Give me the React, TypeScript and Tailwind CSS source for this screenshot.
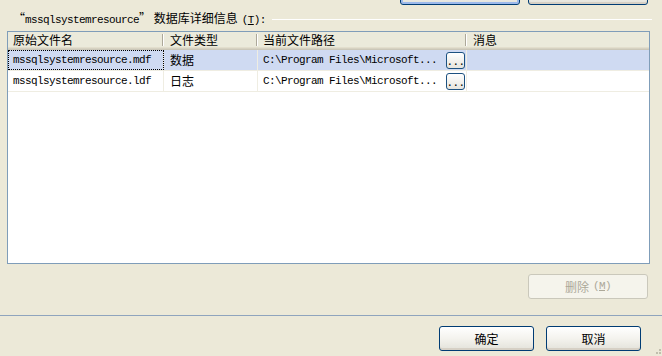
import React from "react";

const cjk = { fontFamily: '"Noto Sans CJK SC", "Noto Sans", sans-serif' };
const mono = { fontFamily: '"Liberation Mono", "Noto Sans CJK SC", monospace' };

function XpButton({ label, focused, w, children }: { label?: string; focused?: boolean; w: string; children?: React.ReactNode }) {
  return (
    <div
      className={`${w} h-[25px] rounded-[3px] border border-[#003C74] bg-gradient-to-b from-[#FFFFFF] via-[#F4F3EE] to-[#E3E2DA] flex items-center justify-center text-[12px] text-black ${focused ? "shadow-[inset_0_0_0_2px_#9CB9EB]" : "shadow-[inset_0_-2px_0_#D6D0C5]"}`}
      style={cjk}
    >
      {label}
      {children}
    </div>
  );
}

function DotBtn() {
  return (
    <div className="w-[19px] h-[17px] mr-[1px] rounded-[3px] border border-[#1C5180] bg-gradient-to-b from-[#FFFFFF] to-[#E6E5DE] flex items-end justify-center pb-[1px] text-[11px] leading-[10px] tracking-[-0.6px] text-black" style={mono}>
      ...
    </div>
  );
}

function Row({ name, type, selected }: { name: string; type: string; selected?: boolean }) {
  return (
    <div className={`flex h-[21px] border-b border-[#EFEDE2] ${selected ? "bg-[#CFDAF2]" : "bg-white"}`}>
      <div className={`w-[156px] shrink-0 flex items-center pl-[5px] text-[11px] tracking-[-0.6px] text-black ${selected ? "outline-1 outline-dotted outline-black -outline-offset-1" : ""} border-r border-[#EFEDE2]`} style={mono}>
        {name}
      </div>
      <div className="w-[94px] shrink-0 flex items-center pl-[6px] text-[12px] text-black border-r border-[#EFEDE2]" style={cjk}>
        {type}
      </div>
      <div className="w-[209px] shrink-0 flex items-center justify-between pl-[5px] text-[11px] tracking-[-0.6px] text-black border-r border-[#EFEDE2]" style={mono}>
        <span>C:\Program Files\Microsoft...</span>
        <DotBtn />
      </div>
      <div className="flex-1" />
    </div>
  );
}

function HeadCell({ label, w, sep = true, pl }: { label: string; w: string; sep?: boolean; pl: string }) {
  return (
    <div className={`${w} shrink-0 flex items-center justify-between ${pl}`}>
      <span className="text-[12px] leading-[14px] text-black" style={cjk}>{label}</span>
      {sep ? <div className="w-[2px] h-[12px] border-l border-[#ACA899] border-r border-r-white" /> : null}
    </div>
  );
}

export default function App() {
  return (
    <div className="w-[662px] h-[356px] bg-[#ECE9D8] relative overflow-hidden flex flex-col">
      {/* clipped top buttons */}
      <div className="h-[5px] overflow-hidden flex items-end pl-[400px] gap-[8px] shrink-0">
        <XpButton w="w-[120px]" focused />
        <XpButton w="w-[120px]" />
      </div>

      {/* label row */}
      <div className="mt-[7px] h-[14px] flex items-center pl-[13px] pr-[10px] shrink-0">
        <span className="text-[12px] leading-[14px] text-black whitespace-nowrap" style={cjk}>
          “<span className="text-[11px] tracking-[-0.6px]" style={mono}>mssqlsystemresource</span>” 数据库详细信息
          <span className="text-[11px] tracking-[-0.6px] ml-[4px]" style={mono}>(<span className="underline">T</span>):</span>
        </span>
        <div className="flex-1 ml-[6px] h-px bg-[#D0CEBF] border-b border-white" />
      </div>

      {/* list */}
      <div className="mt-[5px] ml-[7px] w-[643px] h-[233px] shrink-0 border border-[#7F9DB9] bg-white flex flex-col">
        <div className="h-[18px] flex bg-[#EBEADB] shadow-[inset_0_-1px_0_#CBC7B8,inset_0_-2px_0_#D6D2C2,inset_0_-3px_0_#E2DECD] pb-[3px]">
          <HeadCell label="原始文件名" w="w-[156px]" pl="pl-[5px]" />
          <HeadCell label="文件类型" w="w-[94px]" pl="pl-[6px]" />
          <HeadCell label="当前文件路径" w="w-[209px]" pl="pl-[5px]" />
          <HeadCell label="消息" w="flex-1" pl="pl-[6px]" sep={false} />
        </div>
        <Row name="mssqlsystemresource.mdf" type="数据" selected />
        <Row name="mssqlsystemresource.ldf" type="日志" />
      </div>

      {/* delete */}
      <div className="mt-[10px] flex justify-end pr-[14px] shrink-0">
        <div className="w-[120px] h-[25px] rounded-[3px] border border-[#CAC8BB] bg-[#F5F4EC] flex items-center justify-center text-[12px] text-[#ACA899]" style={cjk}>
          删除<span className="text-[11px] tracking-[-0.6px] ml-[4px]" style={mono}>(<span className="underline">M</span>)</span>
        </div>
      </div>

      {/* separator */}
      <div className="mt-[16px] h-px bg-[#8FA4BD] shrink-0" />

      {/* ok / cancel */}
      <div className="mt-[10px] flex justify-end gap-[12px] pr-[21px] shrink-0">
        <XpButton w="w-[95px]" label="确定" />
        <XpButton w="w-[95px]" label="取消" />
      </div>

      {/* size grip */}
      <svg className="absolute right-0 bottom-0" width="10" height="10" viewBox="0 0 10 10">
        <rect x="7" y="3" width="2" height="2" fill="#C1BEAD" />
        <rect x="4" y="6" width="2" height="2" fill="#C1BEAD" />
        <rect x="7" y="6" width="2" height="2" fill="#C1BEAD" />
      </svg>
    </div>
  );
}
